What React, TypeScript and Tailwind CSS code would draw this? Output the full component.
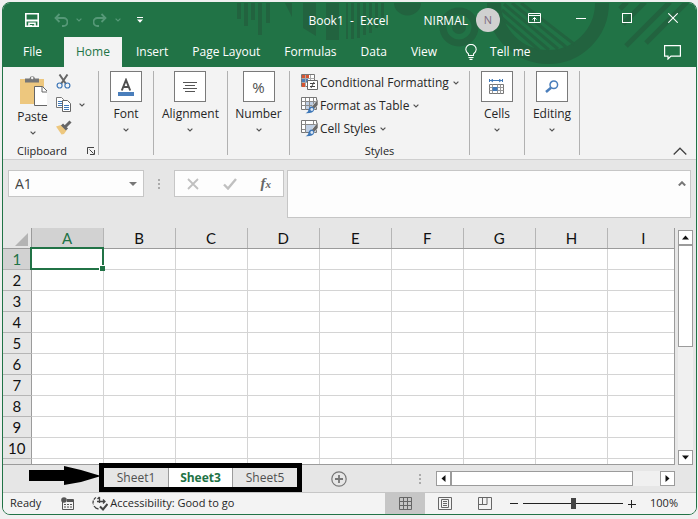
import type { ReactNode } from "react";

const tabs = ["File", "Home", "Insert", "Page Layout", "Formulas", "Data", "View"];
const columns = ["A", "B", "C", "D", "E", "F", "G", "H", "I"];
const rows = [1, 2, 3, 4, 5, 6, 7, 8, 9, 10];
const sheets = ["Sheet1", "Sheet3", "Sheet5"];

function Chevron({ className = "" }: { className?: string }) {
  return (
    <svg viewBox="0 0 6 4" className={`h-1 w-1.5 shrink-0 ${className}`} fill="none" stroke="currentColor" strokeWidth="1.2">
      <path d="M0.6 0.6 3 3 5.4 0.6" />
    </svg>
  );
}

function TitleArt() {
  return (
    <svg viewBox="237 3 460 64" className="pointer-events-none absolute top-0 right-0 h-16 w-[460px]" fill="#22633f">
      <path d="M238 3h4v16h-4zM245 3h4v23h-4zM252 3h4v17h-4zM259 3h4v32h-4zM267 3h4v20h-4z" />
      <path d="M286 3h7v14zM304 3h13v33l-13-8zM327 3h13v37h-13z" />
      <path d="M347 3h2v36h-2zM352 3h3v36h-3zM358 3h3v35h-3zM364 3h3v32h-3zM370 3h3v30h-3zM376 3h3v25h-3zM382 3h3v16h-3z" />
      <path d="M395 3a13.500 12.500 0 0 0 27 0z" />
      <circle cx="460" cy="27" r="16" fill="none" stroke="#22633f" strokeWidth="7" />
      <circle cx="460" cy="27" r="7" />
      <circle cx="549" cy="3" r="54" fill="none" stroke="#22633f" strokeWidth="14" />
      <g fill="none" stroke="#22633f" strokeWidth="3">
        <path d="M503 18 540 50M503 10 550 50M505 4 559 49M513 3 567 47M522 3 575 44" />
      </g>
      <g fill="none" stroke="#22633f" strokeWidth="5">
        <path d="M621 9l7-7M624 24l22-22M627 46l44-44M647 43l41-41" />
      </g>
    </svg>
  );
}

function TitleBar() {
  return (
    <div className="relative flex h-[34px] items-center text-white">
      <button type="button" aria-label="Save" className="ml-[22px]">
        <svg viewBox="0 0 14 14" className="size-3.5" fill="none" stroke="#fff" strokeWidth="1.6">
          <path d="M0.8 0.8h12.400v12.400h-12.400z" />
          <path d="M0.8 7.500h12.400" strokeWidth="2" />
          <path d="M4 13V10.200h6V13" />
          <path d="M5 12h2v2h-2z" fill="#fff" stroke="none" />
        </svg>
      </button>
      <button type="button" aria-label="Undo" className="ml-[15px] flex items-center gap-2 text-[#559877]">
        <svg viewBox="0 0 14 14" className="size-3.5" fill="none" stroke="currentColor" strokeWidth="1.800">
          <path d="M5.500 1 1.500 5l4 4M2 5h7.500a4 4 0 0 1 0 8H8" />
        </svg>
        <Chevron />
      </button>
      <button type="button" aria-label="Redo" className="ml-[11px] flex items-center gap-2 text-[#559877]">
        <svg viewBox="0 0 14 14" className="size-3.5" fill="none" stroke="currentColor" strokeWidth="1.800">
          <path d="M8.500 1l4 4-4 4M12 5H4.500a4 4 0 0 0 0 8H6" />
        </svg>
        <Chevron />
      </button>
      <button type="button" aria-label="Customize Quick Access Toolbar" className="ml-4">
        <svg viewBox="0 0 6 6" className="size-1.5" fill="#fff">
          <path d="M0 0h6v1h-6zM0 2.500h6L3 5.800z" />
        </svg>
      </button>
      <div className="ml-auto flex items-center">
        <span className="mt-0.5 whitespace-pre">Book1  -  Excel</span>
        <button type="button" className="ml-[35px] flex items-center gap-2">
          <span className="mt-0.5">NIRMAL</span>
          <span className="flex size-6 items-center justify-center rounded-full bg-[#d0d0d0] text-[11px] text-[#7d6a80]">N</span>
        </button>
        <button type="button" aria-label="Ribbon Display Options" className="mb-1 ml-7">
          <svg viewBox="0 0 13 10" className="h-2.5 w-[13px]" fill="none" stroke="#fff">
            <path d="M0.500 0.500h12v9h-12zM0.500 2.500h12M6.500 8.500v-4M4.500 6.500l2-2 2 2" />
          </svg>
        </button>
        <button type="button" aria-label="Minimize" className="ml-[35px]">
          <span className="mb-1 block h-px w-2.5 bg-white" />
        </button>
        <button type="button" aria-label="Maximize" className="mb-1 ml-9">
          <span className="block size-2.5 border border-white" />
        </button>
        <button type="button" aria-label="Close" className="mr-[18px] mb-1 ml-9">
          <svg viewBox="0 0 10 10" className="size-2.5" fill="none" stroke="#fff" strokeWidth="1.100">
            <path d="M0.300 0.300l9.400 9.400M9.700 0.300 0.300 9.700" />
          </svg>
        </button>
      </div>
    </div>
  );
}

function RibbonTabs() {
  return (
    <div className="relative flex h-[30px] items-stretch text-white">
      <div role="tablist" className="ml-2 flex">
        {tabs.map((tab) => (
          <button
            key={tab}
            type="button"
            role="tab"
            aria-selected={tab === "Home"}
            className={
              tab === "Home"
                ? "mr-0.5 ml-2.5 bg-[#f3f3f3] px-3 text-[#217346]"
                : "px-3"
            }
          >
            {tab}
          </button>
        ))}
      </div>
      <button type="button" className="ml-4 flex items-center gap-[13px]">
        <svg viewBox="0 0 12 16" className="h-4 w-3" fill="none" stroke="#fff" strokeWidth="1.100">
          <path d="M3.500 11.500V10C2 8.800 0.800 7.500 0.800 5.600a5.200 5.200 0 0 1 10.400 0C11.200 7.500 10 8.800 8.500 10v1.500zM3.500 13.500h5M4.500 15.400h3" />
        </svg>
        Tell me
      </button>
      <button type="button" aria-label="Comments" className="mr-[15px] ml-auto">
        <svg viewBox="0 0 17 15" className="h-[15px] w-[17px]" fill="none" stroke="#fff" strokeWidth="1.200">
          <path d="M0.600 0.600h15.800v10.500H7L4 14v-2.900H0.600z" />
        </svg>
      </button>
    </div>
  );
}

function IconGroup({ label, width, children }: { label: string; width: string; children: ReactNode }) {
  return (
    <div className={`flex h-[84px] justify-center border-r border-[#b1b1b1] ${width}`}>
      <button type="button" className="flex flex-col items-center">
        <span className="flex h-[31px] w-8 items-center justify-center border border-[#7a7a7a] bg-white">{children}</span>
        <span className="mt-1 leading-4">{label}</span>
        <Chevron className="mt-1.5 text-[#555]" />
      </button>
    </div>
  );
}

function StyleIcon({ kind }: { kind: string }) {
  if (kind === "conditional") {
    return (
      <svg viewBox="0 0 17 17" className="size-[17px]" fill="none">
        <path d="M0.500 0.500h13v12h-13z" fill="#fff" stroke="#777" />
        <path d="M1 1h7v3H1zM1 9h4v4H1z" fill="#d65532" />
        <path d="M1 5h6v3H1z" fill="#4a7ebb" />
        <path d="M4.500 1v12M9.500 1v5M0.500 4.500h13M0.500 8.500h6" stroke="#aaa" />
        <path d="M6.500 6.500h10v9h-10z" fill="#fff" stroke="#666" />
        <path d="M9 9.500h5M9 12.500h5M13 8 10 14" stroke="#444" />
      </svg>
    );
  }
  return (
    <svg viewBox="0 0 17 17" className="size-[17px]" fill="none">
      <path d="M0.500 0.500h15v12h-15z" fill="#fff" stroke="#777" />
      <path d="M5 5h10v7H5z" fill="#bfcfe4" />
      {kind === "table" ? (
        <path d="M4.500 1v12M8.500 1v12M12.500 1v8M0.500 4.500h15M0.500 8.500h15" stroke="#8a8a8a" />
      ) : (
        <path d="M4.500 1v12M12.500 1v3M0.500 4.500h15M1 9.500h3" stroke="#8a8a8a" />
      )}
      <path d="M17 2v6l-4.500 5-2.500-2.500z" fill="#6a6a6a" stroke="#f3f3f3" strokeWidth="0.600" />
      <path d="M10.500 9.500c2 .3 3 1.800 2.500 3.700-.6 2-3.500 3.300-8.500 3 2.200-.9 2.500-2 3-3.700.4-1.600 1.500-2.800 3-3z" fill="#3f78b8" />
      <circle cx="10.800" cy="12.500" r="1.400" fill="#dce8f5" />
    </svg>
  );
}

function Ribbon() {
  return (
    <div className="flex border-b border-[#cfcfcf] bg-[#f3f3f3] pt-1 pb-1 text-[#262626]">
      <div className="flex h-[84px] w-24 flex-col border-r border-[#b1b1b1]">
        <div className="flex h-[72px] shrink-0 pl-[15px]">
          <button type="button" className="flex w-[29px] flex-col items-center">
            <svg viewBox="0 0 29 32" className="mt-1 h-8 w-[29px]" fill="none">
              <path d="M2 4h24v25H2z" fill="#edc77e" />
              <path d="M7 3.500h4.500a2.800 2.800 0 0 1 5.500 0h4v4H7z" fill="#777" />
              <circle cx="14.200" cy="3" r="1.200" fill="#f3f3f3" />
              <path d="M16.500 11.500h8l5 5v14h-13z" fill="#fff" stroke="#666" />
              <path d="M24 11.500v5.500h5" stroke="#666" />
            </svg>
            <span className="mt-0.5 leading-4">Paste</span>
            <Chevron className="mt-1.5 text-[#555]" />
          </button>
          <div className="ml-[9px] flex flex-col gap-2 pt-[3px]">
            <button type="button" aria-label="Cut">
              <svg viewBox="0 0 15 15" className="size-[15px]" fill="none">
                <path d="M3.500 0.500 10 10M11.500 0.500 5 10" stroke="#666" strokeWidth="2" />
                <circle cx="3.600" cy="11.500" r="2.500" stroke="#3f78b8" strokeWidth="1.200" />
                <circle cx="11.400" cy="11.500" r="2.500" stroke="#3f78b8" strokeWidth="1.200" />
              </svg>
            </button>
            <button type="button" aria-label="Copy" className="flex items-center gap-[7px]">
              <svg viewBox="0 0 16 15" className="h-[15px] w-4" fill="none">
                <path d="M0.500 0.500h5l2 2v8h-7z" fill="#fff" stroke="#777" />
                <path d="M2 4.500h4M2 6.500h4M2 8.500h4" stroke="#3f78b8" />
                <path d="M6.500 3.500h5l3 3v8h-8z" fill="#fff" stroke="#666" />
                <path d="M8 8.500h5M8 10.500h5M8 12.500h5" stroke="#3f78b8" />
              </svg>
              <Chevron className="text-[#555]" />
            </button>
            <button type="button" aria-label="Format Painter">
              <svg viewBox="0 0 16 15" className="h-[15px] w-4" fill="none">
                <path d="M0 6.500 5 5l5.500 5.500L8 14 5.500 14.500z" fill="#edc77e" />
                <path d="M6 4.500 11 9.500M9.500 6.500 14.500 1.500" stroke="#666" strokeWidth="3" />
              </svg>
            </button>
          </div>
        </div>
        <div className="flex h-4 shrink-0 items-center justify-between pr-[3px] pl-3.5">
          <span className="text-[11px] leading-4">Clipboard</span>
          <button type="button" aria-label="Clipboard settings">
            <svg viewBox="0 0 8 8" className="size-2" fill="none" stroke="#444">
              <path d="M0.500 7V0.500H7M2.500 2.500l4 4M7.500 3v4.500H3" />
            </svg>
          </button>
        </div>
      </div>
      <IconGroup label="Font" width="w-[55px]">
        <svg viewBox="0 0 16 18" className="h-[18px] w-4" fill="none">
          <path d="M3.800 12.500 8 2l4.200 10.500M5.300 9h5.400" stroke="#505050" strokeWidth="2" />
          <path d="M0 14h16v4H0z" fill="#4a7ebb" />
        </svg>
      </IconGroup>
      <IconGroup label="Alignment" width="w-[74px]">
        <svg viewBox="0 0 14 10" className="h-2.5 w-3.5" stroke="#555">
          <path d="M0 0.500h14M2 3.500h10M0 6.500h14M2 9.500h10" />
        </svg>
      </IconGroup>
      <IconGroup label="Number" width="w-[62px]">
        <span className="text-[15px] text-[#505050]">%</span>
      </IconGroup>
      <div className="flex h-[84px] w-[180px] flex-col border-r border-[#b1b1b1]">
        <div className="flex flex-col pl-[11px]">
          {[
            ["conditional", "Conditional Formatting"],
            ["table", "Format as Table"],
            ["cell", "Cell Styles"],
          ].map(([kind, label]) => (
            <button key={kind} type="button" className="flex h-[23px] items-center whitespace-nowrap">
              <StyleIcon kind={kind} />
              <span className="ml-0.5">{label}</span>
              <Chevron className="ml-1 text-[#555]" />
            </button>
          ))}
        </div>
        <span className="mt-[3px] text-center text-[11px] leading-4">Styles</span>
      </div>
      <IconGroup label="Cells" width="w-[55px]">
        <svg viewBox="0 0 16 16" className="size-4" fill="none">
          <path d="M0.500 0v3M13.500 0v3M1 1.500h12M4 0 2 1.500 4 3M10 0l2 1.500L10 3" stroke="#3f78b8" />
          <path d="M0.500 5.500h14v9h-14z" fill="#fff" stroke="#777" />
          <path d="M0.500 8.500h14M0.500 11.500h14M3.500 5.500v9M8.500 5.500v9M11.500 5.500v9" stroke="#999" />
          <path d="M3.500 8h5v4h-5z" fill="#3f78b8" />
        </svg>
      </IconGroup>
      <IconGroup label="Editing" width="w-[55px]">
        <svg viewBox="0 0 14 14" className="size-3.5" fill="none" stroke="#4a7ebb">
          <circle cx="8.800" cy="4.800" r="3.800" strokeWidth="1.500" />
          <path d="M6 7.800 1 12" strokeWidth="2.500" />
        </svg>
      </IconGroup>
      <button type="button" aria-label="Collapse the Ribbon" className="mr-[9px] ml-auto self-end">
        <svg viewBox="0 0 14 8" className="h-2 w-3.5" fill="none" stroke="#444" strokeWidth="1.300">
          <path d="M0.700 7.500 7 1.200l6.300 6.300" />
        </svg>
      </button>
    </div>
  );
}

function Grip() {
  return (
    <svg viewBox="0 0 2 10" className="h-2.5 w-0.5" fill="#ababab">
      <path d="M0 0h2v2H0zM0 4h2v2H0zM0 8h2v2H0z" />
    </svg>
  );
}

function FormulaBar() {
  return (
    <div className="flex items-start px-[5px] pt-2.5 pb-2.5">
      <div className="flex h-[27px] w-[136px] shrink-0 items-center border border-[#c6c6c6] bg-[#fdfdfd] pr-1.5">
        <input aria-label="Name Box" defaultValue="A1" className="w-full min-w-0 bg-transparent pl-1.5 text-sm text-[#444] outline-none" />
        <button type="button" aria-label="Name list">
          <svg viewBox="0 0 8 4" className="h-1 w-2" fill="#777">
            <path d="M0 0h8L4 4z" />
          </svg>
        </button>
      </div>
      <div className="flex h-[27px] w-[30px] shrink-0 items-center justify-center">
        <Grip />
      </div>
      <div className="flex h-[27px] w-[110px] shrink-0 items-center justify-between border border-[#c6c6c6] bg-[#fdfdfd] px-3">
        <button type="button" aria-label="Cancel">
          <svg viewBox="0 0 12 12" className="size-3" fill="none" stroke="#c0c0c0" strokeWidth="1.800">
            <path d="M1 1l10 10M11 1 1 11" />
          </svg>
        </button>
        <button type="button" aria-label="Enter">
          <svg viewBox="0 0 14 12" className="h-3 w-3.5" fill="none" stroke="#c0c0c0" strokeWidth="2.400">
            <path d="M1 6.500l4 4L13 1" />
          </svg>
        </button>
        <button type="button" aria-label="Insert Function" className="font-['Liberation_Serif',serif] text-[15px] leading-5 font-bold text-[#666] italic">
          f<span className="text-[11px]">x</span>
        </button>
      </div>
      <div className="ml-[3px] flex h-12 min-w-0 flex-1 border border-[#c6c6c6] bg-[#fdfdfd]">
        <textarea aria-label="Formula Bar" className="min-w-0 flex-1 resize-none bg-transparent outline-none" />
        <button type="button" aria-label="Collapse Formula Bar" className="mt-2.5 mr-1 self-start">
          <svg viewBox="0 0 8 5" className="h-[5px] w-2" fill="none" stroke="#777" strokeWidth="2">
            <path d="M0.800 4.500 4 1.300l3.200 3.200" />
          </svg>
        </button>
      </div>
    </div>
  );
}

function Grid() {
  return (
    <div className="min-w-0 flex-1 overflow-hidden border-r border-b border-[#9b9b9b]">
      <table className="w-full min-w-[677px] table-fixed border-collapse bg-white font-['Lato',sans-serif] text-[15px] leading-5 text-[#111]">
        <colgroup>
          <col className="w-[28px]" />
          {columns.map((c) => (
            <col key={c} className="w-[72px]" />
          ))}
        </colgroup>
        <thead>
          <tr className="h-5 bg-[#e6e6e6]">
            <th aria-label="Select all" className="border-r border-b border-[#9b9b9b] p-0">
              <svg viewBox="0 0 13 13" className="mt-0.5 mr-[3px] ml-auto size-[13px]" fill="#b4b4b4">
                <path d="M13 0v13H0z" />
              </svg>
            </th>
            {columns.map((c) => (
              <th
                key={c}
                scope="col"
                className={`border-r border-b border-[#9b9b9b] border-r-[#b5b5b5] p-0 font-normal ${
                  c === "A" ? "bg-[#d2d2d2] text-[#217346]" : ""
                }`}
              >
                {c}
              </th>
            ))}
          </tr>
        </thead>
        <tbody>
          {rows.map((r) => (
            <tr key={r} className="h-[21px]">
              <th
                scope="row"
                className={`border-r border-b border-[#b5b5b5] border-r-[#9b9b9b] p-0 font-normal ${
                  r === 1 ? "bg-[#d2d2d2] text-[#217346]" : "bg-[#e6e6e6]"
                }`}
              >
                {r}
              </th>
              {columns.map((c) => (
                <td key={c} className="relative border-r border-b border-[#d4d4d4] p-0">
                  {r === 1 && c === "A" && (
                    <span className="absolute -inset-px -top-0.5 -left-0.5 border-2 border-[#217346]">
                      <span className="absolute -right-[3px] -bottom-[3px] size-[6px] border-t border-l border-white bg-[#217346]" />
                    </span>
                  )}
                </td>
              ))}
            </tr>
          ))}
          <tr className="h-[21px]">
            <th className="border-r border-[#9b9b9b] bg-[#e6e6e6] p-0" />
            {columns.map((c) => (
              <td key={c} className="border-r border-[#d4d4d4] p-0" />
            ))}
          </tr>
        </tbody>
      </table>
    </div>
  );
}

function ScrollArrow({ label, path }: { label: string; path: string }) {
  return (
    <button type="button" aria-label={label} className="flex size-[15px] shrink-0 items-center justify-center border border-[#9b9b9b] bg-white">
      <svg viewBox="0 0 7 7" className="size-[7px]" fill="#111">
        <path d={path} />
      </svg>
    </button>
  );
}

function SheetBar() {
  return (
    <div className="flex h-[27px] items-center">
      <svg viewBox="0 0 72 20" className="mt-px ml-[26px] h-5 w-[72px] shrink-0 self-start" fill="#000">
        <path d="M0 4h35V0l17 4 20 6-20 6-17 3v-4H0z" />
      </svg>
      <div className="relative mt-[3px] ml-[3px] flex h-[19px] self-start" role="tablist">
        {sheets.map((s) => (
          <button
            key={s}
            type="button"
            role="tab"
            aria-selected={s === "Sheet3"}
            className={
              s === "Sheet3"
                ? "w-[65px] border-x border-[#9b9b9b] bg-white font-bold text-[#217346]"
                : "w-16 text-[#505050]"
            }
          >
            {s}
          </button>
        ))}
        <span className="pointer-events-none absolute -inset-[5px] border-5 border-black" />
      </div>
      <button type="button" aria-label="New sheet" className="ml-[34px]">
        <svg viewBox="0 0 16 16" className="size-4" fill="none" stroke="#777">
          <circle cx="8" cy="8" r="7.200" strokeWidth="1.200" />
          <path d="M8 4v8M4 8h8" strokeWidth="1.800" />
        </svg>
      </button>
      <div className="ml-auto flex items-center">
        <Grip />
        <div className="mr-[21px] ml-[15px] flex w-[239px] bg-[#f0f0f0]">
          <ScrollArrow label="Scroll left" path="M5.500 0v7L1.500 3.500z" />
          <div className="h-[15px] w-[182px] border border-[#9b9b9b] bg-white" />
          <div className="flex-1" />
          <ScrollArrow label="Scroll right" path="M1.500 0v7l4-3.500z" />
        </div>
      </div>
    </div>
  );
}

function StatusBar() {
  return (
    <div className="flex h-[22px] items-center border-t border-[#c6c6c6] bg-[#f3f3f3] pl-[7px] text-[11px] text-[#262626]">
      <span>Ready</span>
      <button type="button" aria-label="Record macro" className="ml-5">
        <svg viewBox="0 0 13 13" className="size-[13px]" fill="none">
          <path d="M1.500 5v7.500h11v-10H6" stroke="#555" />
          <path d="M6 3h7v2H6z" fill="#555" />
          <path d="M3 7.500h8M3 10h8" stroke="#555" strokeDasharray="2 1" />
          <circle cx="3" cy="3" r="2.800" fill="#555" />
        </svg>
      </button>
      <button type="button" className="ml-[18px] flex items-center gap-0.5">
        <svg viewBox="0 0 16 15" className="h-[15px] w-4" fill="none" stroke="#444" strokeWidth="1.300">
          <path d="M4 1.500a6 6 0 0 0-2.500 7.500" strokeDasharray="3 1" />
          <path d="M2 10a6 6 0 0 0 4.500 3M7.500 1v6M5.500 3 7.500 1M5 5.500h8M11 3.500l2 2-2 2" />
          <path d="M8 10.500l3 3L15.500 8" strokeWidth="2" />
        </svg>
        Accessibility: Good to go
      </button>
      <div className="ml-auto flex h-full">
        <button type="button" aria-label="Normal" className="flex w-10 items-center justify-center bg-[#c6c6c6]">
          <svg viewBox="0 0 13 13" className="size-[13px]" fill="none" stroke="#666">
            <path d="M0.500 0.500h12v12h-12zM4.500 0v13M8.500 0v13M0 4.500h13M0 8.500h13" />
          </svg>
        </button>
        <button type="button" aria-label="Page Layout view" className="flex w-10 items-center justify-center">
          <svg viewBox="0 0 14 13" className="h-[13px] w-3.5" fill="none" stroke="#666">
            <path d="M0.500 0.500h13v12h-13zM3.500 2.500h7v8h-7zM5 4.500h4M5 6.500h4M5 8.500h4" />
          </svg>
        </button>
        <button type="button" aria-label="Page Break Preview" className="flex w-10 items-center justify-center">
          <svg viewBox="0 0 14 13" className="h-[13px] w-3.5" fill="none" stroke="#666">
            <path d="M0.500 0.500h13v12h-13zM4.500 0.500v7M0.500 7.500h8.500v-7" />
          </svg>
        </button>
      </div>
      <button type="button" aria-label="Zoom out" className="ml-[5px]">
        <span className="block h-px w-2 bg-[#222]" />
      </button>
      <input
        type="range"
        aria-label="Zoom"
        min={0}
        max={200}
        defaultValue={100}
        className="mx-[5px] h-3 w-[100px] appearance-none bg-transparent [&::-webkit-slider-runnable-track]:h-px [&::-webkit-slider-runnable-track]:bg-[#222] [&::-webkit-slider-thumb]:-mt-[5px] [&::-webkit-slider-thumb]:h-[11px] [&::-webkit-slider-thumb]:w-[5px] [&::-webkit-slider-thumb]:appearance-none [&::-webkit-slider-thumb]:bg-[#444]"
      />
      <button type="button" aria-label="Zoom in">
        <svg viewBox="0 0 8 8" className="size-2" stroke="#222">
          <path d="M0 4.500h8M3.500 0v8" />
        </svg>
      </button>
      <span className="mr-[18px] ml-3.5">100%</span>
    </div>
  );
}

export default function App() {
  return (
    <div className="flex h-screen flex-col bg-[#f0f0f0] pt-0.5 pr-px pb-1 pl-0.5 font-['Open_Sans','Noto_Sans',sans-serif] text-xs">
      <div className="flex min-h-0 flex-1 flex-col overflow-hidden rounded-lg border border-[#217346] bg-[#e6e6e6]">
        <header className="relative bg-[#217346]">
          <TitleArt />
          <TitleBar />
          <RibbonTabs />
        </header>
        <Ribbon />
        <FormulaBar />
        <main className="flex min-h-0 flex-1">
          <Grid />
          <div className="mt-0.5 mr-[3px] ml-[3px] flex w-[15px] flex-col bg-[#f0f0f0]">
            <ScrollArrow label="Scroll up" path="M0 5.500h7L3.500 1.500z" />
            <div className="h-[102px] border border-[#9b9b9b] bg-white" />
            <div className="flex-1" />
            <ScrollArrow label="Scroll down" path="M0 1.500h7L3.500 5.500z" />
          </div>
        </main>
        <SheetBar />
        <StatusBar />
      </div>
    </div>
  );
}
